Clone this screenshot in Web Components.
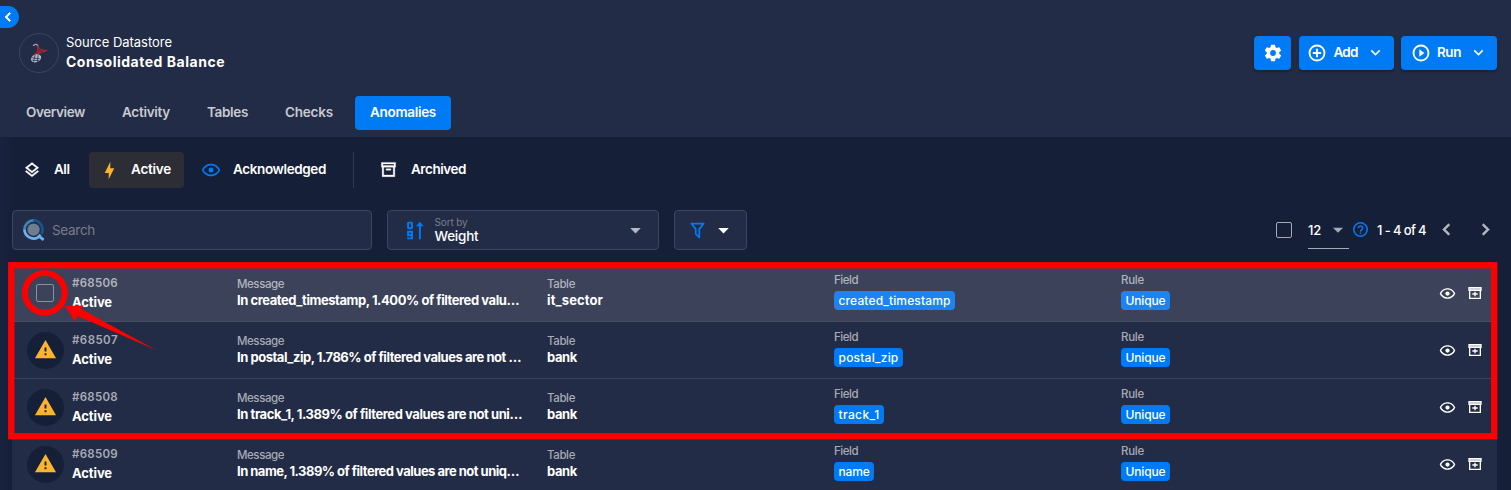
<!DOCTYPE html>
<html lang="en">
<head>
<meta charset="utf-8">
<title>Consolidated Balance – Anomalies</title>
<style>
  html, body { margin: 0; height: 100%; overflow: hidden; background: #161f38; }
  body { font-family: Inter, "Open Sans", sans-serif; color: #fff; }
</style>
</head>
<body>
<datastore-page></datastore-page>
<script>
const ICONS = {
  left: '<path d="M15.41,16.58L10.83,12L15.41,7.41L14,6L8,12L14,18L15.41,16.58Z"/>',
  right: '<path d="M8.59,16.58L13.17,12L8.59,7.41L10,6L16,12L10,18L8.59,16.58Z"/>',
  down: '<path d="M7.41,8.58L12,13.17L16.59,8.58L18,10L12,16L6,10L7.41,8.58Z"/>',
  caret: '<path d="M6.500,9.500L12,15L17.500,9.500H6.500Z"/>',
  cog: '<path d="M12,15.5A3.5,3.5 0 0,1 8.5,12A3.5,3.5 0 0,1 12,8.5A3.5,3.5 0 0,1 15.5,12A3.5,3.5 0 0,1 12,15.5M19.43,12.97C19.47,12.65 19.5,12.33 19.5,12C19.5,11.67 19.47,11.34 19.43,11L21.54,9.37C21.73,9.22 21.78,8.95 21.66,8.73L19.66,5.27C19.54,5.05 19.27,4.96 19.05,5.05L16.56,6.05C16.04,5.66 15.5,5.32 14.87,5.07L14.5,2.42C14.46,2.18 14.25,2 14,2H10C9.75,2 9.54,2.18 9.5,2.42L9.13,5.07C8.5,5.32 7.96,5.66 7.44,6.05L4.95,5.05C4.73,4.96 4.46,5.05 4.34,5.27L2.34,8.73C2.21,8.95 2.27,9.22 2.46,9.37L4.57,11C4.53,11.34 4.5,11.67 4.5,12C4.5,12.33 4.53,12.65 4.57,12.97L2.46,14.63C2.27,14.78 2.21,15.05 2.34,15.27L4.34,18.73C4.46,18.95 4.73,19.03 4.95,18.95L7.44,17.94C7.96,18.34 8.5,18.68 9.13,18.93L9.5,21.58C9.54,21.82 9.75,22 10,22H14C14.25,22 14.46,21.82 14.5,21.58L14.87,18.93C15.5,18.67 16.04,18.34 16.56,17.94L19.05,18.95C19.27,19.03 19.54,18.95 19.66,18.73L21.66,15.27C21.78,15.05 21.73,14.78 21.54,14.63L19.43,12.97Z"/>',
  plus: '<g fill="none" stroke="currentColor" stroke-width="2.2"><circle cx="12" cy="12" r="9"/><path d="M12 7v10M7 12h10"/></g>',
  play: '<circle cx="12" cy="12" r="9" fill="none" stroke="currentColor" stroke-width="2.2"/><path d="M10 16.500l6-4.500-6-4.500z"/>',
  help: '<g fill="none" stroke="currentColor" stroke-width="2"><circle cx="12" cy="12" r="8.500"/><path d="M9.300 10.300a2.700 2.700 0 1 1 4.200 2.200Q12 13.500 12 14.700M12 15.700v1.800"/></g>',
  layers: '<path d="M12,18.54L19.37,12.8L21,14.07L12,21.07L3,14.07L4.62,12.81L12,18.54M12,16L3,9L12,2L21,9L12,16M12,4.53L6.26,9L12,13.47L17.74,9L12,4.53Z" stroke="currentColor" stroke-width=".5"/>',
  bolt: '<path d="M11 15H6L13 1V9H18L11 23V15Z"/>',
  eye: '<path d="M12,9A3,3 0 0,1 15,12A3,3 0 0,1 12,15A3,3 0 0,1 9,12A3,3 0 0,1 12,9M12,4.5C17,4.5 21.27,7.61 23,12C21.27,16.39 17,19.5 12,19.5C7,19.5 2.73,16.39 1,12C2.73,7.61 7,4.5 12,4.5M3.18,12C4.83,15.36 8.24,17.5 12,17.5C15.76,17.5 19.17,15.36 20.82,12C19.17,8.64 15.76,6.5 12,6.5C8.24,6.5 4.83,8.64 3.18,12Z"/>',
  archive: '<path stroke="currentColor" stroke-width=".4" fill-rule="evenodd" d="M20 21H4V9H6V19H18V9H20V21M3 3H21V9H3V3M5 5V7H19V5ZM9 11H15V13H9Z"/>',
  archivePlus: '<path fill-rule="evenodd" d="M21 21H3V9H5V19H19V9H21V21M2 3H22V9H2V3M4 5V7H20V5Z"/><path opacity=".7" d="M3 4h18v4H3z"/><path d="M11 10h2v2.500h3v2h-3V17h-2v-2.500H8v-2h3z"/>',
  filter: '<path d="M15,19.88C15.04,20.18 14.94,20.5 14.71,20.71C14.32,21.1 13.69,21.1 13.3,20.71L9.29,16.7C9.06,16.47 8.96,16.16 9,15.87V10.75L4.21,4.62C3.87,4.19 3.95,3.56 4.38,3.22C4.57,3.08 4.78,3 5,3V3H19V3C19.22,3 19.43,3.08 19.62,3.22C20.05,3.56 20.13,4.19 19.79,4.62L15,10.75V19.88M7.04,5L11,10.06V15.58L13,17.58V10.05L16.96,5H7.04Z"/>',
  alert: '<path d="M13,14H11V10H13M13,18H11V16H13M1,21H23L12,2L1,21Z"/>',
  sort: '<g fill="none" stroke="currentColor" stroke-width="2.200"><rect x="3.500" y="3" width="4.500" height="6.500" rx=".6"/><path d="M8 17.500H3.500V13.500H8V21H2.500M17 22V5"/></g><path d="M17 2l4.500 5h-9z"/>',
  search: '<circle cx="11.500" cy="11.500" r="6.700" fill="#6f7d93"/><g fill="none" stroke-width="3"><path d="M11.500 1.600a10 10 0 0 1 8.700 14.500" stroke="#17568a"/><path d="M11.500 1.600a10 10 0 0 0-9.900 10" stroke="#3f83b8"/><path d="M1.600 11.500a10 10 0 0 0 14.600 8.600l3-3 M16.500 18l6 4.800" stroke="#6cb2ee"/></g>',
  server: '<g fill="none"><path d="M5 3.500c2-2.500 5-2.500 6 1" stroke="#a9afbd" stroke-width="1.500"/><path d="M9 2l5 5 9 2-9 3.500-9.500 2.500 5.500-5.500z" fill="#a82430"/><path d="M11 6l5 5m-2-4l-5 6m9-5l-4 4" stroke="#4a2440" stroke-width=".9"/><ellipse cx="8.500" cy="18.300" rx="6.300" ry="4.600" fill="#b4bac8" transform="rotate(-25 8.500 18.300)"/><path d="M3 17.500l10 1.500M4 20.500l8 .8M7.500 13.500l-2 9M11 13.500l-1 9" stroke="#2b3450" stroke-width="1"/></g>'
};

function define(name, css, html) {
  const tpl = document.createElement('template');
  customElements.define(name, class extends HTMLElement {
    connectedCallback() {
      if (this.shadowRoot) return;
      tpl.innerHTML = `<style>*{box-sizing:border-box}${css}</style>` + (typeof html === 'function' ? html(this) : html);
      this.attachShadow({ mode: 'open' }).appendChild(tpl.content.cloneNode(true));
    }
  });
}

define('ui-icon', ':host{display:block;flex:none}svg{display:block;fill:currentColor}',
  el => { const s = el.getAttribute('size') || 18;
    return `<svg width="${s}" height="${s}" viewBox="0 0 24 24">${ICONS[el.getAttribute('name')]}</svg>`; });

define('datastore-page', `
  :host{display:block;position:relative;width:1511px;height:490px;overflow:hidden}
  .main{padding:15px 14px 0 12px;height:353px;background:linear-gradient(90deg,#18233f,#161f38 12px)}
  .list{display:block;margin-top:15px}`, `
  <page-header></page-header>
  <div class="main">
    <status-filters></status-filters>
    <list-toolbar></list-toolbar>
    <div class="list">
      <anomaly-row hover num="#68506" msg="In created_timestamp, 1.400% of filtered valu…" msgw="282" table="it_sector" tablew="56" field="created_timestamp" fieldw="112"></anomaly-row>
      <anomaly-row num="#68507" msg="In postal_zip, 1.786% of filtered values are not …" msgw="284" table="bank" tablew="30" field="postal_zip" fieldw="60"></anomaly-row>
      <anomaly-row num="#68508" msg="In track_1, 1.389% of filtered values are not uni…" msgw="285" table="bank" tablew="30" field="track_1" fieldw="41"></anomaly-row>
      <anomaly-row num="#68509" msg="In name, 1.389% of filtered values are not uniq…" msgw="282" table="bank" tablew="30" field="name" fieldw="31"></anomaly-row>
    </div>
  </div>
  <collapse-handle></collapse-handle>
  <callout-marks></callout-marks>`);

define('collapse-handle', `
  :host{position:absolute;left:0;top:6px;width:19px;height:22px;border-radius:0 11px 11px 0;background:#007bf5;display:flex;align-items:center}
  ui-icon{stroke:#fff;stroke-width:1;margin-left:-1.500px}`, '<ui-icon name="left" size="18"></ui-icon>');

define('page-header', `
  :host{display:block;box-sizing:border-box;height:137px;background:#232c46;padding:33px 14px 0 11px}
  .top{display:flex;height:40px;align-items:center}
  .logo{width:40px;height:40px;margin-left:8px;border:1px solid #3c445c;border-radius:50%;display:flex;align-items:center;justify-content:center}
  .title{margin:-3px 0 0 7px;display:flex;flex-direction:column}
  .a{font-size:13px;line-height:20px;height:20px}
  .b{font-size:14px;line-height:20px;height:20px;font-weight:700}
  .actions{margin-left:auto;display:flex}
  .actions action-button+action-button{margin-left:7.5px}
  nav{display:flex;gap:7px;margin-top:23px}`, `
  <div class="top">
    <div class="logo"><ui-icon name="server" size="20"></ui-icon></div>
    <div class="title"><div class="a"><fit-text w="106">Source Datastore</fit-text></div><div class="b"><fit-text w="159">Consolidated Balance</fit-text></div></div>
    <div class="actions">
      <action-button icon="cog" w="37" pad="8.5"></action-button>
      <action-button icon="plus" w="95" pad="8.5"><fit-text w="24">Add</fit-text></action-button>
      <action-button icon="play" w="96" pad="9.5"><fit-text w="24">Run</fit-text></action-button>
    </div>
  </div>
  <nav>
    <nav-tab><fit-text w="59">Overview</fit-text></nav-tab>
    <nav-tab><fit-text w="48">Activity</fit-text></nav-tab>
    <nav-tab><fit-text w="41">Tables</fit-text></nav-tab>
    <nav-tab><fit-text w="48">Checks</fit-text></nav-tab>
    <nav-tab active><fit-text w="66">Anomalies</fit-text></nav-tab>
  </nav>`);

define('action-button', `
  :host{box-sizing:border-box;display:flex;align-items:center;height:34px;border-radius:4px;background:#007bf5;font-size:13.5px;font-weight:600;box-shadow:0 2px 3px rgba(0,0,0,.25)}
  .i{margin-top:-1px}
  .t{margin:-2px 0 0 6.500px;height:20px;line-height:20px}.c{margin:-1px 0 0 8px}`,
  el => `<style>:host{width:${el.getAttribute('w')}px;padding-left:${el.getAttribute('pad')}px}</style><ui-icon class="i" name="${el.getAttribute('icon')}" size="20"></ui-icon>` +
    (el.children.length ? '<div class="t"><slot></slot></div><ui-icon class="c" name="down" size="19"></ui-icon>' : ''));

define('nav-tab', `
  :host{box-sizing:border-box;display:flex;align-items:center;height:34px;padding:0 15px 2px;border-radius:4px;font-size:13.5px;font-weight:600;color:#c8cad1}
  :host([active]){background:#007bf5;color:#fff}`, '<slot></slot>');

define('status-filters', `
  :host{display:flex;height:36px}
  .f{display:flex;align-items:center;border-radius:4px;font-size:13.5px;font-weight:600;line-height:20px}
  .f fit-text{margin:-2px 0 0 auto}
  .all{width:70px;padding:0 12.5px 0 11px}
  .act{width:95px;margin-left:7px;padding:0 13px 0 11px;background:#2d2d35}
  .act ui-icon{color:#fcb42f}
  .ack{width:142px;padding-left:17px;color:#fff}.ack ui-icon{color:#007bf5}
  .ar{padding-left:25px}.ar ui-icon{margin-top:-1px}.ar fit-text{margin-left:13px}
  .sep{width:1px;background:#303952;margin-left:27px}`, `
  <div class="f all"><ui-icon name="layers" size="18"></ui-icon><fit-text w="15.5">All</fit-text></div>
  <div class="f act"><ui-icon name="bolt" size="19"></ui-icon><fit-text w="40">Active</fit-text></div>
  <div class="f ack"><ui-icon name="eye" size="20"></ui-icon><fit-text w="93">Acknowledged</fit-text></div>
  <div class="sep"></div>
  <div class="f ar"><ui-icon name="archive" size="19"></ui-icon><fit-text w="55">Archived</fit-text></div>`);

define('list-toolbar', `
  :host{display:flex;height:40px;margin-top:22px}
  .box{display:flex;align-items:center;height:40px;border:1px solid #3d465f;border-radius:4px;background:#232c46}
  .search{width:360px;padding-left:10px;font-size:13.5px;color:#787d8a}
  .search fit-text{margin-left:7px}
  .sort{width:272px;margin-left:15px;padding:0 11px 0 17px}
  .sort ui-icon:first-child{color:#007bf5}
  .val{margin:-1px 0 0 8.500px;font-size:13.5px;line-height:14px;font-weight:500}
  .lab{font-size:10px;line-height:11px;height:12px;color:#787d8a;font-weight:400}
  .sort .c{margin-left:auto;color:#b5b9c3}
  .filter{width:73px;margin-left:15px;padding-left:12px}
  .filter ui-icon:first-child{color:#007bf5}
  .filter .c{margin-left:4px}
  .pager{display:flex;align-items:center;margin-left:auto;font-size:13px;font-weight:500;width:221px}
  .chk{width:16px;height:16px;border:1.500px solid #a6aab6;border-radius:2px}
  .size{width:41px;height:38px;margin-left:16px;border-bottom:1px solid #a6aab6;display:flex;align-items:center;justify-content:space-between}
  .size ui-icon{color:#a6aab6}
  .help{color:#007bf5;margin:-1px 0 0 2px}
  .n{margin:-1px 0 0 7px}.chev{color:#b5b9c3;stroke:#b5b9c3;stroke-width:.7}`, `
  <div class="box search"><ui-icon name="search" size="22"></ui-icon><fit-text w="43">Search</fit-text></div>
  <div class="box sort"><ui-icon name="sort" size="21"></ui-icon><div class="val"><div class="lab"><fit-text w="33">Sort by</fit-text></div><fit-text w="44">Weight</fit-text></div><ui-icon class="c" name="caret" size="23"></ui-icon></div>
  <div class="box filter"><ui-icon name="filter" size="21"></ui-icon><ui-icon class="c" name="caret" size="23"></ui-icon></div>
  <div class="pager"><div class="chk"></div><div class="size"><fit-text w="13">12</fit-text><ui-icon name="caret" size="22"></ui-icon></div>
    <ui-icon class="help" name="help" size="19"></ui-icon><fit-text class="n" w="49">1 - 4 of 4</fit-text>
    <ui-icon class="chev" style="margin:-1px 0 0 8.500px" name="left" size="23"></ui-icon><ui-icon class="chev" style="margin:-1px 0 0 16px" name="right" size="23"></ui-icon></div>`);

/* Seven tracks: mark, id, message, table, field, rule, row actions. */
define('anomaly-row', `
  :host{box-sizing:border-box;display:grid;grid-template-columns:60px 165px 310px 287px 287px 200px 1fr;height:57px;border-bottom:1px solid #3b435a;background:#232c46}
  :host([hover]){background:#3b4259;border-color:#474e64}
  .mark{display:flex;align-items:center;padding-left:14.500px}
  .disc{width:37px;height:37px;border-radius:50%;background:#161f38;color:#fcb42f;display:flex;align-items:center;justify-content:center;padding-bottom:1px}
  .chk{width:18px;height:18px;margin-left:9.500px;border:1.500px solid #8b90a0;border-radius:2px}
  .l{font-size:11.5px;line-height:16px;height:16px;color:#a7abb6;font-weight:500}
  :host([hover]) .l{color:#b1b4be}
  .v{font-size:13px;line-height:18px;height:18px;font-weight:700}
  .id{padding-top:10px}.id .l{font-weight:600;font-size:11.5px}.id .v{margin-top:2px}
  .m{padding-top:11px}.m .v{margin-top:-1px}
  .t{padding-top:7px}
  .chip{display:flex;align-items:center;width:max-content;height:19px;margin-top:3px;border-radius:4px;background:#007bf5;padding:0 4.500px 1px;font-size:12px;font-weight:500}
  :host([hover]) .chip{background:#1c84f2}
  .acts{display:flex;align-items:center;justify-content:flex-end;gap:11px;padding-right:14px}`,
  el => { const a = n => el.getAttribute(n);
    return `
  <div class="mark">${el.hasAttribute('hover') ? '<div class="chk"></div>' : '<div class="disc"><ui-icon name="alert" size="23"></ui-icon></div>'}</div>
  <div class="id"><div class="l"><fit-text w="46">${a('num')}</fit-text></div><div class="v"><fit-text w="40">Active</fit-text></div></div>
  <div class="m"><div class="l"><fit-text w="47">Message</fit-text></div><div class="v"><fit-text w="${a('msgw')}">${a('msg')}</fit-text></div></div>
  <div class="m"><div class="l"><fit-text w="28">Table</fit-text></div><div class="v"><fit-text w="${a('tablew')}">${a('table')}</fit-text></div></div>
  <div class="t"><div class="l"><fit-text w="24">Field</fit-text></div><div class="chip"><fit-text w="${a('fieldw')}">${a('field')}</fit-text></div></div>
  <div class="t"><div class="l"><fit-text w="23">Rule</fit-text></div><div class="chip"><fit-text w="40">Unique</fit-text></div></div>
  <div class="acts"><ui-icon name="eye" size="17"></ui-icon><ui-icon name="archivePlus" size="16"></ui-icon></div>`; });

define('callout-marks', ':host{position:absolute;left:0;top:0;pointer-events:none}svg{display:block}', `
  <svg width="1511" height="490" viewBox="0 0 1511 490">
    <rect x="11.250" y="265.250" width="1483" height="171" fill="none" stroke="#f00" stroke-width="6.300"/>
    <circle cx="44.800" cy="292.800" r="19.900" fill="none" stroke="#f00" stroke-width="6"/>
    <path d="M65 306L83.500 305.500L81 309L156 350L77.500 316L75 321.500Z" fill="#f00"/>
  </svg>`);

customElements.define('fit-text', class extends HTMLElement {
  connectedCallback() {
    if (this.shadowRoot) return;
    this.attachShadow({ mode: 'open' }).innerHTML =
      '<style>:host{display:inline-block;white-space:nowrap;flex:none;vertical-align:top}</style><slot></slot>';
    const w = +this.getAttribute('w');
    const natural = this.getBoundingClientRect().width;
    const gap = (w - natural) / Math.max(1, this.textContent.length);
    this.style.letterSpacing = gap.toFixed(3) + 'px';
    this.style.width = w + 'px';
  }
});
</script>
</body>
</html>
